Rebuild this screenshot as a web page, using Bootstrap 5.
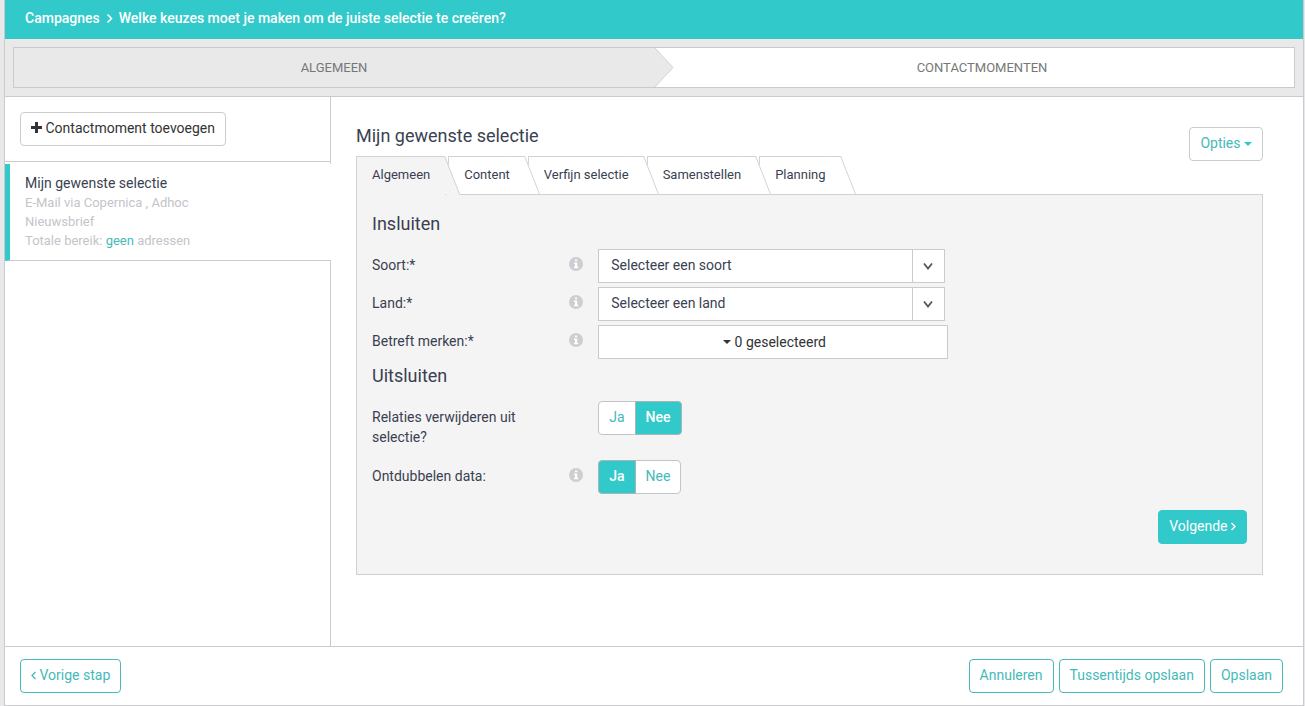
<!DOCTYPE html>
<html lang="nl">
<head>
<meta charset="utf-8">
<meta name="viewport" content="width=device-width, initial-scale=1">
<title>Campagnes</title>
<link href="https://cdn.jsdelivr.net/npm/bootstrap@5.3.0/dist/css/bootstrap.min.css" rel="stylesheet">
<style>
  :root { --teal: #32c9ca; --teal-text: #45bab9; --line: #cbcbce; --ink: #3a3f51; }
  body { font-family: Roboto, "Liberation Sans", sans-serif; font-size: 14px; line-height: 20px; color: var(--ink); background: #e8e8eb; }
  a { color: var(--teal-text); text-decoration: none; }
  .app-shell { margin: 0 1px 0 4px; border: 1px solid var(--line); border-top: 0; background: #fff; }
  .topbar { background: var(--teal); padding: 8px 20px 11px; color: #fff; font-weight: 500; }
  .topbar a { color: #fff; }
  .steps-wrap { background: #e9e9e9; padding: 8px; border-bottom: 1px solid var(--line); }
  .steps { border: 1px solid var(--line); background: #fff; font-size: 13px; }
  .step { height: 39px; color: #777; }
  .step-current { background: #e9e9e9; }
  .step-next { padding-left: 16px; }
  .step-arrow { left: 100%; top: 0; width: 20px; height: 39px; }
  .sidebar { width: 326px; border-right: 1px solid var(--line); }
  .sidebar-head { padding: 15px; border-bottom: 1px solid var(--line); margin-bottom: 2px; }
  .moment { margin-right: -1px; padding: 9px 15px 10px; border-left: 5px solid var(--teal); border-bottom: 1px solid var(--line); background: #fff; }
  .moment-meta { font-size: 13px; line-height: 19px; color: #c4c4ca; width: 175px; }
  .btn { --bs-btn-font-size: 14px; --bs-btn-line-height: 20px; --bs-btn-padding-x: 10px; --bs-btn-padding-y: 6px; --bs-btn-border-radius: 4px; padding-top: 5px; padding-bottom: 7px; }
  .btn-plain { --bs-btn-color: #333; --bs-btn-bg: #fff; --bs-btn-border-color: #ccc; }
  .btn-plain.teal { --bs-btn-color: var(--teal-text); }
  .btn-line { --bs-btn-color: var(--teal-text); --bs-btn-bg: #fff; --bs-btn-border-color: var(--teal-text); }
  .btn-fill { --bs-btn-color: #fff; --bs-btn-bg: var(--teal); --bs-btn-border-color: var(--teal); --bs-btn-hover-color: #fff; --bs-btn-hover-bg: #2bb; }
  .btn-toggle { --bs-btn-color: var(--teal-text); --bs-btn-bg: #fff; --bs-btn-border-color: #bbb; --bs-btn-active-color: #fff; --bs-btn-active-bg: var(--teal); --bs-btn-active-border-color: #aab4b4; }
  .btn-check:checked + .btn-toggle { font-weight: 500; }
  .btn-check:not(:checked) + .btn-toggle { border-color: #c4c4c4; }
  .content-area { padding: 29px 40px 71px 25px; }
  h1, h2 { font-size: 18px; line-height: 20px; font-weight: 400; margin: 0; }
  h2 { margin-bottom: 15px; }
  .row + h2 { margin-top: 7px; }
  .page-head { height: 30px; }
  .page-head .btn { margin-top: 1px; }
  .tabs { list-style: none; margin: 0; padding: 0; font-size: 13px; line-height: 18px; }
  .tab-link { display: block; position: relative; height: 38px; margin-right: 3px; padding: 9px 15px 0; border: 1px solid #d3d3d5; border-width: 1px 0 0 1px; background: #fff; color: var(--ink); }
  .tab-link::after { content: ""; position: absolute; top: -1px; right: 0; width: 14px; height: 38px; background: inherit; border: 1px solid #d3d3d5; border-width: 1px 1px 0 0; transform: skewX(21.5deg); transform-origin: top right; }
  .tab-link.active { height: 39px; margin-bottom: -1px; background: #f4f4f4; }
  .tab-link.active::after { height: 39px; }
  .tabs li { position: relative; }
  .tabs li:nth-child(1) { z-index: 5; } .tabs li:nth-child(2) { z-index: 4; }
  .tabs li:nth-child(3) { z-index: 3; } .tabs li:nth-child(4) { z-index: 2; }
  .panel { border: 1px solid #d0d0d3; background: #f4f4f4; padding: 19px 15px 30px; }
  .panel .row { --bs-gutter-x: 30px; margin-bottom: 4px; }
  .panel .row.choice { margin-bottom: 16px; }
  .panel .row.choice-tall { margin-bottom: 13px; }
  .panel .row > .col-3 { padding-right: 0; }
  .field-label { max-width: 160px; padding-top: 6px; }
  .info { width: 14px; height: 14px; margin-top: 8px; }
  .picker { width: 347px; max-width: 100%; }
  .picker select { width: 100%; height: 34px; padding: 0 44px 2px 12px; border: 1px solid var(--line); border-radius: 0; background: #fff; color: var(--ink); appearance: none; }
  .picker-arrow { top: 1px; right: 1px; bottom: 1px; width: 32px; padding-right: 1px; border-left: 1px solid var(--line); pointer-events: none; }
  .multi { width: 350px; max-width: 100%; height: 34px; border: 1px solid var(--line); background: #fff; color: #333; padding: 0 1px 0 3px; }
  .footer-bar { border-top: 1px solid var(--line); padding: 12px 20px 12px 15px; }
  .footer-actions { gap: 5px; }
  .icon-plus { vertical-align: -1px; }
  .icon-caret { vertical-align: 1px; }
  svg { flex: none; }
</style>
</head>
<body>
<div class="app-shell d-flex flex-column min-vh-100">
  <nav class="topbar d-flex align-items-center" aria-label="Kruimelpad">
    <a href="#">Campagnes</a>
    <svg class="mx-1" width="11" height="12" viewBox="0 0 11 12" fill="none" stroke="#fff" stroke-width="1.6"><path d="M3.500 2.500 7.500 6.500 3.500 10.500"/></svg>
    <span>Welke keuzes moet je maken om de juiste selectie te creëren?</span>
  </nav>

  <div class="steps-wrap">
    <div class="steps d-flex">
      <div class="step step-current w-50 position-relative d-flex align-items-center justify-content-center">ALGEMEEN
        <svg class="step-arrow position-absolute" viewBox="0 0 20 39"><path d="M0 0H1L19 19.500 1 39H0Z" fill="#e9e9e9"/><path d="M1 0 19 19.500 1 39" fill="none" stroke="#d4d4d6"/></svg>
      </div>
      <div class="step step-next w-50 d-flex align-items-center justify-content-center">CONTACTMOMENTEN</div>
    </div>
  </div>

  <div class="d-flex flex-grow-1">
    <aside class="sidebar flex-shrink-0">
      <div class="sidebar-head">
        <button type="button" class="btn btn-plain"><svg class="icon-plus align-baseline" width="11" height="11" viewBox="0 0 11 11" fill="#333"><path d="M4 0h3v4h4v3H7v4H4V7H0V4h4z"/></svg> Contactmoment toevoegen</button>
      </div>
      <div class="moment">
        <div>Mijn gewenste selectie</div>
        <div class="moment-meta">E-Mail via Copernica , Adhoc Nieuwsbrief<br>Totale bereik: <a href="#">geen</a> adressen</div>
      </div>
    </aside>

    <main class="content-area flex-grow-1">
      <div class="page-head d-flex justify-content-between align-items-start">
        <h1>Mijn gewenste selectie</h1>
        <button type="button" class="btn btn-plain teal">Opties <svg class="icon-caret" width="8" height="5" viewBox="0 0 8 5" fill="#32c9ca"><path d="M0 0h8L4 4z"/></svg></button>
      </div>
      <ul class="tabs d-flex">
        <li><a class="tab-link active" href="#">Algemeen</a></li>
        <li><a class="tab-link" href="#">Content</a></li>
        <li><a class="tab-link" href="#">Verfijn selectie</a></li>
        <li><a class="tab-link" href="#">Samenstellen</a></li>
        <li><a class="tab-link" href="#">Planning</a></li>
      </ul>
      <form class="panel">
        <h2>Insluiten</h2>
        <div class="row">
          <div class="col-3 d-flex justify-content-between"><label class="field-label" for="soort">Soort:*</label>
            <svg class="info" viewBox="0 0 14 14"><circle cx="7" cy="7" r="7" fill="#ceced2"/><path d="M6 2.500h2.200v1.800H6zM5 5.500h3.200v4.300H9.300v1.500H4.900V9.800H6V7H5z" fill="#fff"/></svg></div>
          <div class="col-9"><div class="picker position-relative"><select id="soort"><option>Selecteer een soort</option></select>
            <span class="picker-arrow position-absolute d-flex align-items-center justify-content-center"><svg width="10" height="8" viewBox="0 0 10 8" fill="none" stroke="#555" stroke-width="1.800"><path d="M1 1.500 5 6.500 9 1.500"/></svg></span></div></div>
        </div>
        <div class="row">
          <div class="col-3 d-flex justify-content-between"><label class="field-label" for="land">Land:*</label>
            <svg class="info" viewBox="0 0 14 14"><circle cx="7" cy="7" r="7" fill="#ceced2"/><path d="M6 2.500h2.200v1.800H6zM5 5.500h3.200v4.300H9.300v1.500H4.900V9.800H6V7H5z" fill="#fff"/></svg></div>
          <div class="col-9"><div class="picker position-relative"><select id="land"><option>Selecteer een land</option></select>
            <span class="picker-arrow position-absolute d-flex align-items-center justify-content-center"><svg width="10" height="8" viewBox="0 0 10 8" fill="none" stroke="#555" stroke-width="1.800"><path d="M1 1.500 5 6.500 9 1.500"/></svg></span></div></div>
        </div>
        <div class="row">
          <div class="col-3 d-flex justify-content-between"><label class="field-label" for="merken">Betreft merken:*</label>
            <svg class="info" viewBox="0 0 14 14"><circle cx="7" cy="7" r="7" fill="#ceced2"/><path d="M6 2.500h2.200v1.800H6zM5 5.500h3.200v4.300H9.300v1.500H4.900V9.800H6V7H5z" fill="#fff"/></svg></div>
          <div class="col-9"><button type="button" id="merken" class="multi d-flex align-items-center justify-content-center gap-1"><svg width="8" height="4" viewBox="0 0 8 4" fill="#333"><path d="M0 0h8L4 4z"/></svg>0 geselecteerd</button></div>
        </div>
        <h2>Uitsluiten</h2>
        <div class="row choice-tall">
          <div class="col-3"><div class="field-label" id="lbl-relaties">Relaties verwijderen uit selectie?</div></div>
          <div class="col-9"><div class="btn-group" role="group" aria-labelledby="lbl-relaties">
            <input type="radio" class="btn-check" name="relaties" id="rel-ja"><label class="btn btn-toggle" for="rel-ja">Ja</label>
            <input type="radio" class="btn-check" name="relaties" id="rel-nee" checked><label class="btn btn-toggle" for="rel-nee">Nee</label>
          </div></div>
        </div>
        <div class="row choice">
          <div class="col-3 d-flex justify-content-between"><div class="field-label" id="lbl-dubbel">Ontdubbelen data:</div>
            <svg class="info" viewBox="0 0 14 14"><circle cx="7" cy="7" r="7" fill="#ceced2"/><path d="M6 2.500h2.200v1.800H6zM5 5.500h3.200v4.300H9.300v1.500H4.900V9.800H6V7H5z" fill="#fff"/></svg></div>
          <div class="col-9"><div class="btn-group" role="group" aria-labelledby="lbl-dubbel">
            <input type="radio" class="btn-check" name="dubbel" id="dub-ja" checked><label class="btn btn-toggle" for="dub-ja">Ja</label>
            <input type="radio" class="btn-check" name="dubbel" id="dub-nee"><label class="btn btn-toggle" for="dub-nee">Nee</label>
          </div></div>
        </div>
        <div class="d-flex justify-content-end"><button type="button" class="btn btn-fill">Volgende <svg width="5" height="9" viewBox="0 0 5 9" fill="none" stroke="#fff" stroke-width="1.500" class="align-baseline"><path d="M.5 1 4 4.500.5 8"/></svg></button></div>
      </form>
    </main>
  </div>

  <footer class="footer-bar d-flex justify-content-between">
    <button type="button" class="btn btn-line"><svg width="5" height="9" viewBox="0 0 5 9" fill="none" stroke="#45bab9" stroke-width="1.300" class="align-baseline"><path d="M4.500 1 1 4.500 4.500 8"/></svg> Vorige stap</button>
    <div class="footer-actions d-flex">
      <button type="button" class="btn btn-line">Annuleren</button>
      <button type="button" class="btn btn-line">Tussentijds opslaan</button>
      <button type="button" class="btn btn-line">Opslaan</button>
    </div>
  </footer>
</div>
<script src="https://cdn.jsdelivr.net/npm/bootstrap@5.3.0/dist/js/bootstrap.bundle.min.js"></script>
</body>
</html>
